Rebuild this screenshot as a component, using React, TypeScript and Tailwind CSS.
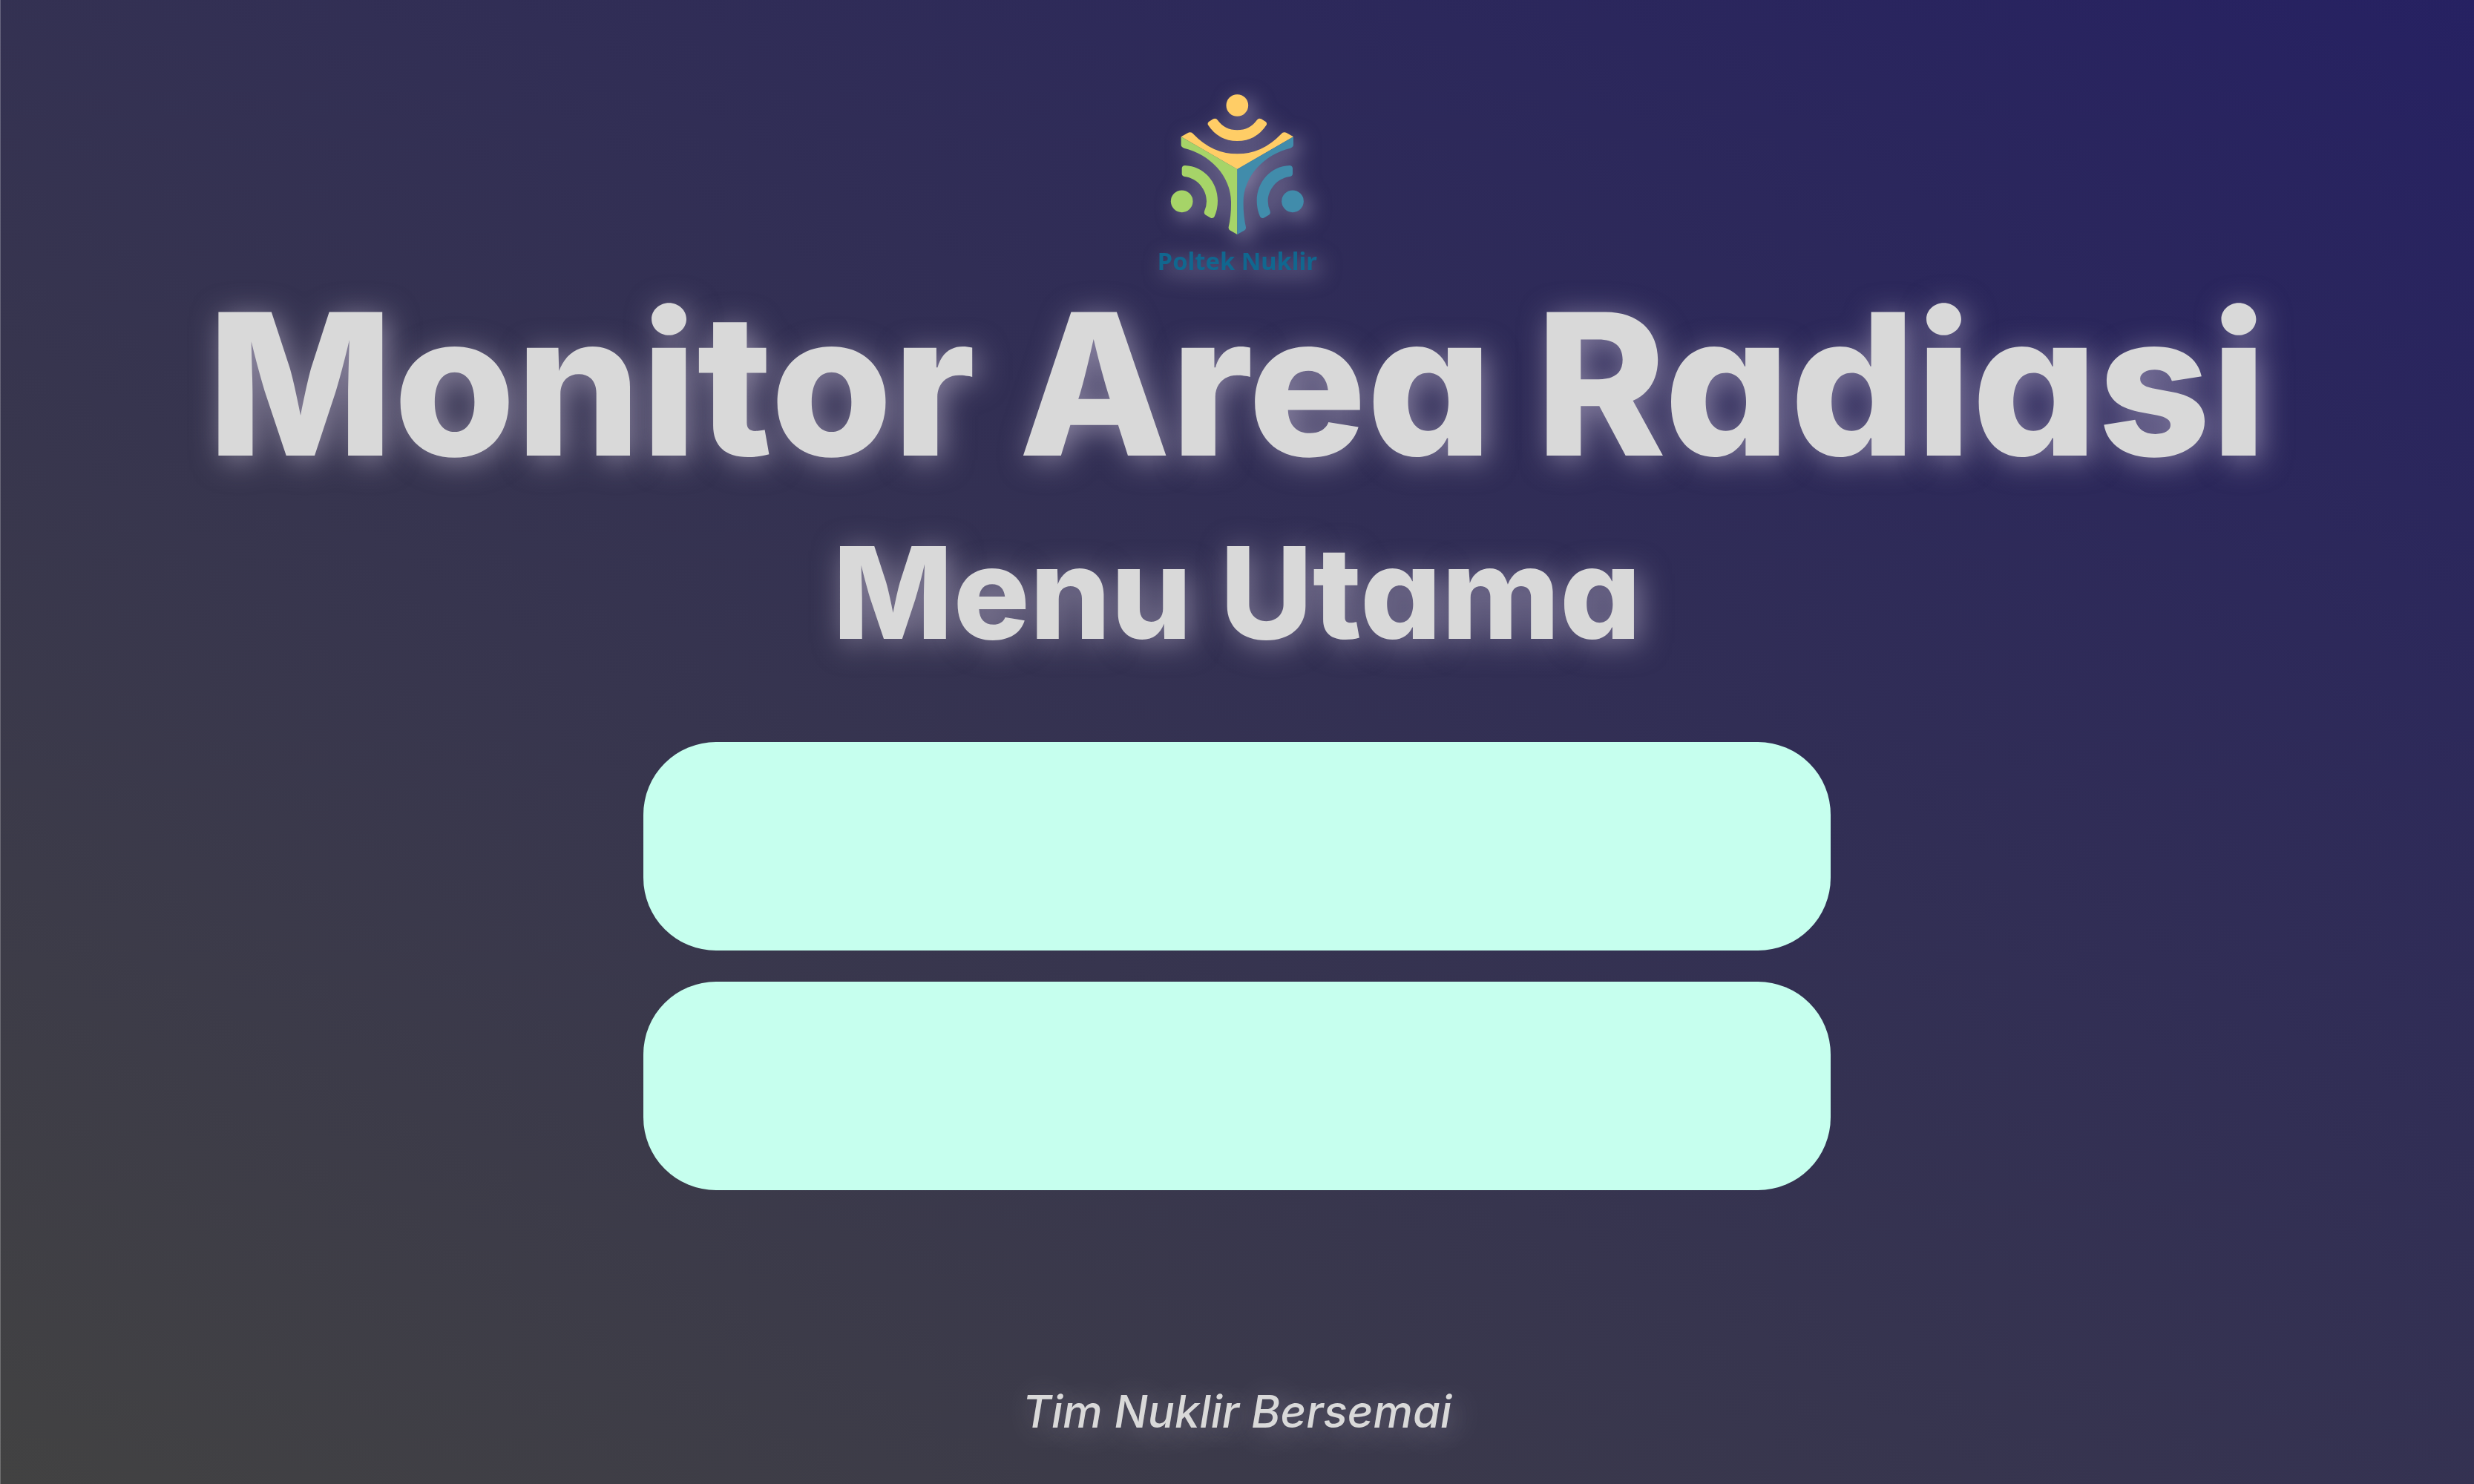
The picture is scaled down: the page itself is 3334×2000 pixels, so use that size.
function Logo() {
  return (
    <svg
      viewBox="80 75 660 735"
      role="img"
      aria-label="Poltek Nuklir"
      className="h-[245px] w-[220px] overflow-visible [filter:drop-shadow(8px_8px_14px_rgba(225,215,240,0.5))]"
    >
      <g fill="#ffcd66">
        <circle cx="411" cy="126" r="44.5" />
        <path d="M292 204Q290 197 296 192L314 181Q325 176 332 186Q361 226 411 226Q461 226 490 186Q497 176 508 181L526 192Q532 197 530 204Q487 270 411 270Q335 270 292 204Z" />
        <path d="M184 253L212 237Q224 231 234 242Q310 322 411 322Q512 322 588 242Q598 231 610 237L638 253L411 384Z" />
      </g>
      <g fill="#a6d468">
        <circle cx="187" cy="514" r="44.5" />
        <path d="M187 380Q188 370 200 369C275 372 332 435 332 512Q332 545 319 575Q314 584 304 581L286 571Q275 565 278 554Q287 536 287 514C287 465 249 420 198 414Q188 413 187 403Z" />
        <path d="M184 253L411 384V648L381 631Q375 627 376 618Q387 570 386 515C385 410 300 324 196 299Q184 295 184 286Z" />
      </g>
      <g fill="#418cab">
        <circle cx="635" cy="514" r="44.5" />
        <path d="M635 380Q634 370 622 369C547 372 490 435 490 512Q490 545 503 575Q508 584 518 581L536 571Q547 565 544 554Q535 536 535 514C535 465 573 420 624 414Q634 413 635 403Z" />
        <path d="M638 253L411 384V648L441 631Q447 627 446 618Q435 570 436 515C437 410 522 324 626 299Q638 295 638 286Z" />
      </g>
      <text
        x="411"
        y="793"
        textAnchor="middle"
        fill="#11678f"
        className="font-['Noto_Sans',sans-serif] text-[98px] font-bold"
      >
        Poltek Nuklir
      </text>
    </svg>
  );
}

const menuItems = ["Menu 1", "Menu 2"];

export default function App() {
  return (
    <div className="flex min-h-screen flex-col items-center bg-[linear-gradient(30deg,#424242,#262162)] pt-[125px] pb-[60px] font-['Inter',sans-serif] text-[#d9d9d9] shadow-[inset_1px_0_0_rgba(255,255,255,0.25)] [font-feature-settings:'cv11']">
      <header className="flex flex-col items-center text-center font-extrabold">
        <Logo />
        <h1 className="mt-[12px] text-[266px] leading-[270px] [text-shadow:6px_6px_40px_rgba(225,215,235,0.5)]">
          Monitor Area Radiasi
        </h1>
        <h2 className="mt-[46px] text-[172px] leading-[200px] [text-shadow:6px_6px_40px_rgba(225,215,235,0.5)]">
          Menu Utama
        </h2>
      </header>
      <nav className="mt-[102px] flex w-[48%] flex-col gap-[42px]">
        {menuItems.map((item) => (
          <button
            key={item}
            type="button"
            aria-label={item}
            className="h-[281px] rounded-[98px] bg-[#c6ffee]"
          />
        ))}
      </nav>
      <footer className="mt-auto text-[60px] leading-[76px] font-medium italic [text-shadow:6px_6px_40px_rgba(225,215,235,0.4)]">
        Tim Nuklir Bersemai
      </footer>
    </div>
  );
}
